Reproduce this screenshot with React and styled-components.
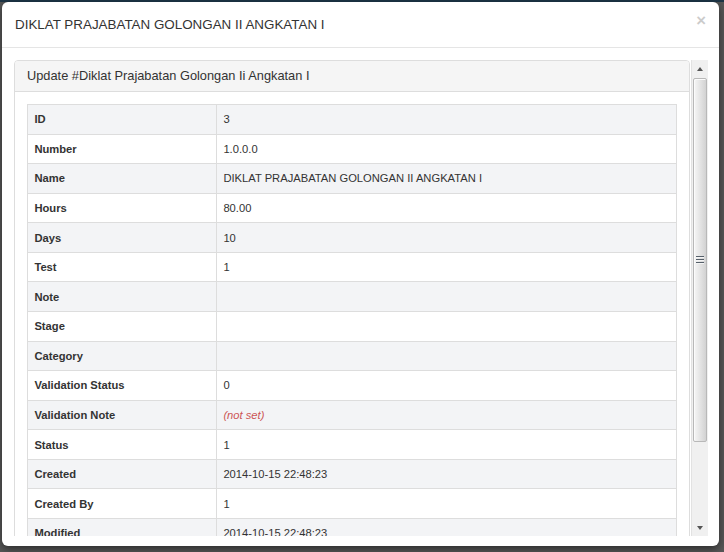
import styled, { createGlobalStyle } from "styled-components";

const GlobalStyle = createGlobalStyle`
    html, body {
        margin: 0;
        padding: 0;
    }
    body {
        font-family: "Liberation Sans", Arial, sans-serif;
        color: #333;
    }
    * {
        box-sizing: border-box;
    }
`

const Backdrop = styled.div`
    width: 724px;
    height: 552px;
    padding: 2px 5px 6px 2px;
    background: linear-gradient(#1d3547 0 2px, #575757 2px);
    overflow: hidden;
`

const Modal = styled.div`
    width: 717px;
    background: #fff;
    border-radius: 6px;
    box-shadow: 0 3px 9px rgba(0, 0, 0, 0.5);
    display: flex;
    flex-direction: column;
`

const ModalHeader = styled.div`
    display: flex;
    justify-content: space-between;
    align-items: flex-start;
    padding: 13px;
    border-bottom: 1px solid #e5e5e5;
`

const ModalTitle = styled.h4`
    margin: 0;
    font-size: 13.4px;
    font-weight: normal;
    line-height: 19px;
    color: #333;
`

const Close = styled.button`
    border: 0;
    background: transparent;
    padding: 0;
    margin-top: -2px;
    font-family: "Liberation Sans", Arial, sans-serif;
    font-size: 16.8px;
    font-weight: bold;
    line-height: 1;
    color: #000;
    opacity: 0.2;
    cursor: pointer;
`

const ModalBody = styled.div`
    padding: 12px 11px 10px 12px;
`

const ScrollFrame = styled.div`
    height: 476px;
    display: flex;
`

const Viewport = styled.div`
    flex: 1;
    min-width: 0;
    overflow: hidden;
`

const Scrollbar = styled.div`
    width: 17px;
    flex: none;
    display: flex;
    flex-direction: column;
    background: #f0f0f0;
    border-left: 1px solid #e2e2e2;
`

const ArrowButton = styled.div`
    height: 17px;
    flex: none;
    display: flex;
    align-items: center;
    justify-content: center;

    &::before {
        content: "";
        width: 0;
        height: 0;
        border-left: 3.5px solid transparent;
        border-right: 3.5px solid transparent;
        ${p => (p.$down ? "border-top: 4px solid #555;" : "border-bottom: 4px solid #555;")}
    }
`

const Track = styled.div`
    flex: 1;
    padding: 1px 1px 0 1px;
`

const Thumb = styled.div`
    height: 364px;
    border: 1px solid #b8b8b8;
    border-radius: 2px;
    background: linear-gradient(to right, #f6f6f6, #e8e8e8 40%, #d2d2d2);
    box-shadow: inset 1px 1px 0 #fbfbfb;
    display: flex;
    align-items: center;
    justify-content: center;
`

const Grip = styled.div`
    width: 8px;
    height: 8px;
    background: repeating-linear-gradient(#56606a 0 1px, #f4f4f4 1px 2px, transparent 2px 3px);
`

const Panel = styled.div`
    border: 1px solid #ddd;
    border-radius: 4px;
    margin-right: 1px;
    background: #fff;
`

const PanelHeading = styled.div`
    background: #f5f5f5;
    border-bottom: 1px solid #ddd;
    border-radius: 3px 3px 0 0;
    padding: 8px 12px;
`

const PanelTitle = styled.h3`
    margin: 0;
    font-size: 12.8px;
    font-weight: normal;
    line-height: 1.1;
    color: #333;
`

const PanelBody = styled.div`
    padding: 12px;
`

const Table = styled.table`
    width: 100%;
    border-collapse: collapse;
    border: 1px solid #ddd;
    table-layout: fixed;
    font-size: 11.2px;
`

const Row = styled.tr`
    background: ${p => (p.$striped ? "#f3f4f6" : "#fff")};
`

const Label = styled.th`
    width: 189px;
    text-align: left;
    font-weight: bold;
    border: 1px solid #ddd;
    padding: 6.28px 6.4px;
    line-height: 16px;
    height: 29.57px;
    color: #333;
`

const Value = styled.td`
    border: 1px solid #ddd;
    padding: 6.28px 6.4px;
    line-height: 16px;
    height: 29.57px;
    color: #333;
`

const NotSet = styled.span`
    color: #c55;
    font-style: italic;
`

const rows = [
    ["ID", "3"],
    ["Number", "1.0.0.0"],
    ["Name", "DIKLAT PRAJABATAN GOLONGAN II ANGKATAN I"],
    ["Hours", "80.00"],
    ["Days", "10"],
    ["Test", "1"],
    ["Note", ""],
    ["Stage", ""],
    ["Category", ""],
    ["Validation Status", "0"],
    ["Validation Note", null],
    ["Status", "1"],
    ["Created", "2014-10-15 22:48:23"],
    ["Created By", "1"],
    ["Modified", "2014-10-15 22:48:23"],
]

const App = () => {
    return (
        <>
            <GlobalStyle />
            <Backdrop>
                <Modal>
                    <ModalHeader>
                        <ModalTitle>DIKLAT PRAJABATAN GOLONGAN II ANGKATAN I</ModalTitle>
                        <Close>×</Close>
                    </ModalHeader>
                    <ModalBody>
                        <ScrollFrame>
                            <Viewport>
                                <Panel>
                                    <PanelHeading>
                                        <PanelTitle>Update #Diklat Prajabatan Golongan Ii Angkatan I</PanelTitle>
                                    </PanelHeading>
                                    <PanelBody>
                                        <Table>
                                            <tbody>
                                                {rows.map(([label, value], i) => (
                                                    <Row key={label} $striped={i % 2 === 0}>
                                                        <Label>{label}</Label>
                                                        <Value>{value === null ? <NotSet>(not set)</NotSet> : value}</Value>
                                                    </Row>
                                                ))}
                                            </tbody>
                                        </Table>
                                    </PanelBody>
                                </Panel>
                            </Viewport>
                            <Scrollbar>
                                <ArrowButton />
                                <Track>
                                    <Thumb>
                                        <Grip />
                                    </Thumb>
                                </Track>
                                <ArrowButton $down />
                            </Scrollbar>
                        </ScrollFrame>
                    </ModalBody>
                </Modal>
            </Backdrop>
        </>
    );
}

export default App
